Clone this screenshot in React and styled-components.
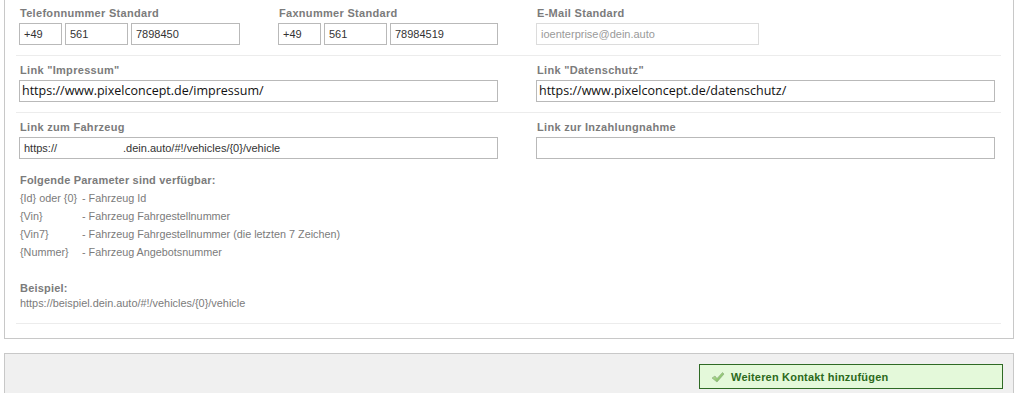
import React from 'react';
import styled, { createGlobalStyle } from 'styled-components';

const GlobalStyle = createGlobalStyle`
  html, body {
    margin: 0;
    padding: 0;
    background: #ffffff;
    font-family: "Liberation Sans", Arial, sans-serif;
    font-size: 11px;
    color: #333;
    overflow: hidden;
  }
`;

const Page = styled.div`
  padding: 0 6px 0 4px;
`;

const Panel = styled.div`
  border: 1px solid #c8c8c8;
  border-top: none;
  background: #fff;
  padding: 0 12px 14px 11px;
`;

const Section = styled.div`
  border-bottom: 1px solid #ececec;
  padding: ${({ $first }) => ($first ? '6px' : '7px')} 6px ${({ $pb }) => $pb || 10}px 3px;
`;

const Row = styled.div`
  display: grid;
  grid-template-columns: ${({ $cols }) => $cols};
  column-gap: 38px;
`;

const Label = styled.div`
  font-weight: bold;
  color: #7b7b7b;
  line-height: 14px;
  height: 14px;
  margin-bottom: 3px;
  padding-left: 1px;
  letter-spacing: 0.3px;
  white-space: nowrap;
`;

const Group = styled.div`
  display: flex;
  gap: 3px;
`;

const Field = styled.div`
  box-sizing: border-box;
  height: 22px;
  width: ${({ $w }) => ($w ? `${$w}px` : '100%')};
  border: 1px solid ${({ $disabled }) => ($disabled ? '#dcdcdc' : '#b9b9b9')};
  background: #fff;
  font-family: ${({ $big }) => ($big ? '"Open Sans", "Noto Sans", sans-serif' : '"Liberation Sans", Arial, sans-serif')};
  font-size: ${({ $big }) => ($big ? '12.5px' : '11px')};
  color: ${({ $big, $disabled }) => ($disabled ? '#9a9a9a' : $big ? '#111' : '#333')};
  line-height: 20px;
  padding: 0 ${({ $big }) => ($big ? '2px' : '4px')};
  white-space: nowrap;
  overflow: hidden;
`;

const Blank = styled.span`
  display: inline-block;
  width: 66px;
`;

const Hint = styled.div`
  margin-top: 13px;
  padding-left: 1px;
  color: #7b7b7b;
`;

const HintTitle = styled.div`
  font-weight: bold;
  line-height: 17px;
  letter-spacing: 0.2px;
`;

const Params = styled.div`
  display: grid;
  grid-template-columns: 62px auto;
  justify-content: start;
  line-height: 18px;
  font-size: 10.8px;
`;

const Example = styled.div`
  margin-top: 20px;
  line-height: 15px;
`;

const ExampleTitle = styled.div`
  font-weight: bold;
  letter-spacing: 0.2px;
`;

const ExampleUrl = styled.div`
  font-size: 10.9px;
`;

const Footer = styled.div`
  margin-top: 14px;
  border: 1px solid #c8c8c8;
  border-bottom: none;
  background: #f0f0f0;
  height: 29px;
  padding: 10px 10px 0 0;
  display: flex;
  justify-content: flex-end;
  align-items: flex-start;
`;

const AddButton = styled.button`
  box-sizing: border-box;
  width: 304px;
  height: 25px;
  display: flex;
  align-items: center;
  gap: 6px;
  padding: 0 0 0 11px;
  border: 1px solid #2f6a25;
  background: #e4f9da;
  color: #2c6a1c;
  font-family: "Liberation Sans", Arial, sans-serif;
  font-size: 11px;
  font-weight: bold;
  letter-spacing: 0.2px;
  cursor: pointer;
`;

const CheckIcon = () => (
  <svg width="14" height="12" viewBox="0 0 14 12">
    <defs>
      <linearGradient id="chk" x1="0" y1="0" x2="1" y2="1">
        <stop offset="0" stopColor="#c4e8a8" />
        <stop offset="1" stopColor="#6cb24c" />
      </linearGradient>
    </defs>
    <path d="M1 7 L4 5 L6 7.5 L11.5 1.5 L13 3 L6 11 Z" fill="url(#chk)" stroke="#8aa67c" strokeWidth="0.6" strokeLinejoin="round" />
  </svg>
);

const params = [
  ['{Id} oder {0}', '- Fahrzeug Id'],
  ['{Vin}', '- Fahrzeug Fahrgestellnummer'],
  ['{Vin7}', '- Fahrzeug Fahrgestellnummer (die letzten 7 Zeichen)'],
  ['{Nummer}', '- Fahrzeug Angebotsnummer'],
];

export default function App() {
  return (
    <Page>
      <GlobalStyle />
      <Panel>
        <Section $first>
          <Row $cols="221px 220px 459px">
            <div>
              <Label>Telefonnummer Standard</Label>
              <Group>
                <Field $w={43}>+49</Field>
                <Field $w={63}>561</Field>
                <Field $w={109}>7898450</Field>
              </Group>
            </div>
            <div>
              <Label>Faxnummer Standard</Label>
              <Group>
                <Field $w={43}>+49</Field>
                <Field $w={63}>561</Field>
                <Field $w={108}>78984519</Field>
              </Group>
            </div>
            <div>
              <Label>E-Mail Standard</Label>
              <Field $w={223} $disabled>ioenterprise@dein.auto</Field>
            </div>
          </Row>
        </Section>

        <Section>
          <Row $cols="479px 459px">
            <div>
              <Label>Link "Impressum"</Label>
              <Field $big>https://www.pixelconcept.de/impressum/</Field>
            </div>
            <div>
              <Label>Link "Datenschutz"</Label>
              <Field $big>https://www.pixelconcept.de/datenschutz/</Field>
            </div>
          </Row>
        </Section>

        <Section $pb={12}>
          <Row $cols="479px 459px">
            <div>
              <Label>Link zum Fahrzeug</Label>
              <Field>https://<Blank />.dein.auto/#!/vehicles/{'{0}'}/vehicle</Field>
            </div>
            <div>
              <Label>Link zur Inzahlungnahme</Label>
              <Field />
            </div>
          </Row>
          <Hint>
            <HintTitle>Folgende Parameter sind verfügbar:</HintTitle>
            <Params>
              {params.map(([key, text]) => (
                <React.Fragment key={key}>
                  <span>{key}</span>
                  <span>{text}</span>
                </React.Fragment>
              ))}
            </Params>
            <Example>
              <ExampleTitle>Beispiel:</ExampleTitle>
              <ExampleUrl>https://beispiel.dein.auto/#!/vehicles/{'{0}'}/vehicle</ExampleUrl>
            </Example>
          </Hint>
        </Section>
      </Panel>

      <Footer>
        <AddButton>
          <CheckIcon />
          Weiteren Kontakt hinzufügen
        </AddButton>
      </Footer>
    </Page>
  );
}
